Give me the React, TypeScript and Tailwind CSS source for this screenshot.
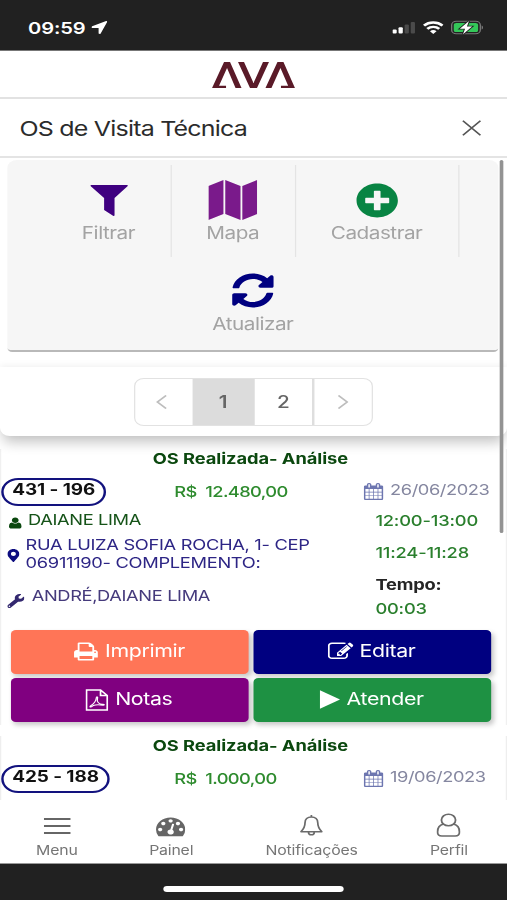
import { FaMapMarkerAlt, FaPlusCircle, FaSyncAlt, FaWrench } from "react-icons/fa";

const paths = {
  print:
    "M448 1536h896v-256h-896v256zm0-640h896v-384h-160q-40 0-68-28t-28-68v-160h-640v640zm1152 64q0-26-19-45t-45-19-45 19-19 45 19 45 45 19 45-19 19-45zm128 0v416q0 13-9.5 22.5t-22.5 9.5h-224v160q0 40-28 68t-68 28h-960q-40 0-68-28t-28-68v-160h-224q-13 0-22.5-9.5t-9.5-22.5v-416q0-79 56.5-135.5t135.5-56.5h64v-544q0-40 28-68t68-28h672q40 0 88 20t76 48l152 152q28 28 48 76t20 88v256h64q79 0 135.5 56.5t56.5 135.5z",
  edit:
    "M888 1184l116-116-152-152-116 116v56h96v96h56zm440-720q-16-16-33 1l-350 350q-17 17-1 33t33-1l350-350q17-17 1-33zm80 594v190q0 119-84.5 203.5t-203.5 84.5h-832q-119 0-203.5-84.5t-84.5-203.5v-832q0-119 84.5-203.5t203.5-84.5h832q63 0 117 25 15 7 18 23 3 17-9 29l-49 49q-14 14-32 8-23-6-45-6h-832q-66 0-113 47t-47 113v832q0 66 47 113t113 47h832q66 0 113-47t47-113v-126q0-13 9-22l64-64q15-15 35-7t20 29zm-96-738l288 288-672 672h-288v-288zm444 132l-92 92-288-288 92-92q28-28 68-28t68 28l152 152q28 28 28 68t-28 68z",
  calendar:
    "M192 1664h288v-288h-288v288zm352 0h320v-288h-320v288zm-352-352h288v-320h-288v320zm352 0h320v-320h-320v320zm-352-384h288v-288h-288v288zm736 736h320v-288h-320v288zm-384-736h320v-288h-320v288zm768 736h288v-288h-288v288zm-384-352h320v-320h-320v320zm-352-864v-288q0-13-9.5-22.5t-22.5-9.5h-64q-13 0-22.5 9.5t-9.5 22.5v288q0 13 9.5 22.5t22.5 9.5h64q13 0 22.5-9.5t9.5-22.5zm736 864h288v-320h-288v320zm-384-384h320v-288h-320v288zm384 0h288v-288h-288v288zm32-480v-288q0-13-9.5-22.5t-22.5-9.5h-64q-13 0-22.5 9.5t-9.5 22.5v288q0 13 9.5 22.5t22.5 9.5h64q13 0 22.5-9.5t9.5-22.5zm384-64v1280q0 52-38 90t-90 38h-1408q-52 0-90-38t-38-90v-1280q0-52 38-90t90-38h128v-96q0-66 47-113t113-47h64q66 0 113 47t47 113v96h384v-96q0-66 47-113t113-47h64q66 0 113 47t47 113v96h128q52 0 90 38t38 90z",
  gauge:
    "M384 1152q0-53-37.5-90.5t-90.5-37.5-90.5 37.5-37.5 90.5 37.5 90.5 90.5 37.5 90.5-37.5 37.5-90.5zm192-448q0-53-37.5-90.5t-90.5-37.5-90.5 37.5-37.5 90.5 37.5 90.5 90.5 37.5 90.5-37.5 37.5-90.5zm428 481l101-382q6-26-7.5-48.5t-38.5-29.5-48 6.5-30 39.5l-101 382q-60 5-107 43.5t-63 98.5q-20 77 20 146t117 89 146-20 89-117q16-60-6-117t-72-91zm660-33q0-53-37.5-90.5t-90.5-37.5-90.5 37.5-37.5 90.5 37.5 90.5 90.5 37.5 90.5-37.5 37.5-90.5zm-640-640q0-53-37.5-90.5t-90.5-37.5-90.5 37.5-37.5 90.5 37.5 90.5 90.5 37.5 90.5-37.5 37.5-90.5zm448 192q0-53-37.5-90.5t-90.5-37.5-90.5 37.5-37.5 90.5 37.5 90.5 90.5 37.5 90.5-37.5 37.5-90.5zm320 448q0 261-141 483-19 29-54 29h-1402q-35 0-54-29-141-221-141-483 0-182 71-348t191-286 286-191 348-71 348 71 286 191 191 286 71 348z",
  user:
    "M1600 1405q0 120-73 189.5t-194 69.5h-874q-121 0-194-69.5t-73-189.5q0-53 3.5-103.5t14-109 26.5-108.5 43-97.5 62-81 85.5-53.5 111.5-20q9 0 42 21.5t74.5 48 108 48 133.5 21.5 133.5-21.5 108-48 74.5-48 42-21.5q61 0 111.5 20t85.5 53.5 62 81 43 97.5 26.5 108.5 14 109 3.5 103.5zm-320-893q0 159-112.5 271.5t-271.5 112.5-271.5-112.5-112.5-271.5 112.5-271.5 271.5-112.5 271.5 112.5 112.5 271.5z",
};

const Glyph = ({ name, className }: { name: keyof typeof paths; className: string }) => (
  <svg viewBox="0 0 1792 1792" fill="currentColor" className={className}>
    <path d={paths[name]} />
  </svg>
);

const StatusBar = () => (
  <div className="flex h-[51px] items-center justify-between border-b border-[#777] bg-[#212121] pt-[5px] pr-[19px] pl-[23px] text-white">
    <div className="flex items-center gap-[5px]">
      <span className="text-[16.5px] leading-5 font-semibold tracking-[-0.1px]">09:59</span>
      <svg viewBox="0 0 13 13" className="h-[13px] w-[13px]" fill="currentColor">
        <path d="M12.1 .1 .6 5.300c-.9.5-.6 1.800.3 1.800H5.900v5c0 1 1.300 1.200 1.700 .3L12.900 .9c.2-.6-.2-1-.8-.8z" />
      </svg>
    </div>
    <div className="flex items-center gap-[6px]">
      <svg viewBox="0 0 19 13" className="h-[13px] w-[19px]">
        <rect x="0" y="8.500" width="3.500" height="4" rx="1" fill="#fff" />
        <rect x="5" y="6.300" width="3.500" height="6.200" rx="1" fill="#fff" />
        <rect x="10" y="3.500" width="3.500" height="9" rx="1" fill="#4b4b4b" />
        <rect x="15" y="1" width="3.500" height="11.500" rx="1" fill="#4b4b4b" />
      </svg>
      <svg viewBox="0 0 17 13" className="h-[13px] w-[17px]" fill="none" stroke="#fff" strokeWidth="2.400">
        <path d="M.9 4.700a10.800 10.800 0 0 1 15.200 0M3.600 7.900a7 7 0 0 1 9.800 0" />
        <path d="M8.500 12.900 5.800 10.300a3.900 3.900 0 0 1 5.400 0z" fill="#fff" stroke="none" />
      </svg>
      <svg viewBox="0 0 27 15" className="h-[15px] w-[27px]">
        <rect x=".6" y="1.200" width="23.500" height="12.600" rx="3.800" fill="none" stroke="#777" strokeWidth="1.100" />
        <rect x="2.300" y="2.900" width="20" height="9.200" rx="2.200" fill="#34c759" />
        <path d="M25.200 5.500c1.500.5 1.500 3.500 0 4z" fill="#777" />
        <path d="M14.800 1 7.300 8.700h4.300L9.900 14.300 17.400 6.500h-4.300z" fill="#fff" stroke="#212121" strokeWidth="1.600" paintOrder="stroke" />
      </svg>
    </div>
  </div>
);

const LogoBar = () => (
  <div className="flex h-[48px] items-center justify-center border-b-2 border-[#e2e2e2] bg-white pt-[2px]">
    <svg viewBox="0 0 83 26" preserveAspectRatio="none" className="h-[26px] w-[68px]" fill="#5a1a28">
      <path d="M0 26 12 0h6L29.500 26h-6L15 6 7 23.800h7V26z" />
      <path d="M26 0h6l9.500 21L51 0h6L45 26h-7z" />
      <path d="M83 26 71.500 0h-6L53.500 26h6L68.500 6 76.200 23.800H69V26z" />
    </svg>
  </div>
);

const TitleBar = () => (
  <div className="flex h-[59px] items-center justify-between border-b-2 border-[#e4e4e4] bg-white pt-[3px] pr-[21px] pl-[16px]">
    <h1 className="text-[20.5px] tracking-[-0.65px] text-[#2b2b2b]">OS de Visita Técnica</h1>
    <svg viewBox="0 0 16 16" preserveAspectRatio="none" className="mb-[3px] h-[16px] w-[16px]" fill="none" stroke="#555" strokeWidth="1.500">
      <path d="M.8 .8l14.400 14.400M15.200 .8.8 15.200" />
    </svg>
  </div>
);

const Toolbar = () => (
  <div className="mt-[2px] ml-[6px] h-[192px] w-[403px] rounded-t-lg rounded-b-sm border-b-2 border-[#b9b9b9] bg-[#f6f6f6] pt-[5px] text-[17px] tracking-[-0.4px] text-[#a3a3a3]">
    <div className="flex h-[92px] justify-center">
      <div className="flex w-[102px] flex-col items-center border-r border-[#e4e4e4] pt-[20px]">
        <svg viewBox="0 0 38 31" preserveAspectRatio="none" className="h-[31px] w-[31px]" fill="#3f0080">
          <path d="M1 0h36q1.200 0 .8 1L24.500 13v17.500q-.5.8-1.500.3L14 25V13L.3 1Q0 0 1 0z" />
        </svg>
        <span className="mt-[5px] leading-6">Filtrar</span>
      </div>
      <div className="flex w-[102px] flex-col items-center border-r border-[#e4e4e4] pt-[15px]">
        <svg viewBox="0 0 48 40" preserveAspectRatio="none" className="h-[40px] w-[40px]" fill="#7a1a8b">
          <path d="M0 6 14.800 0v34L0 40zM16.600 0 31.600 6V40l-15-6zM33.400 6 48 0v34l-14.600 6z" />
        </svg>
        <span className="mt-px leading-6">Mapa</span>
      </div>
      <div className="flex w-[134px] flex-col items-center border-r border-[#e4e4e4] pt-[18px]">
        <FaPlusCircle className="h-[35px] w-[35px] text-[#088443]" />
        <span className="mt-[3px] leading-6">Cadastrar</span>
      </div>
    </div>
    <div className="flex flex-col items-center pt-[16px]">
      <FaSyncAlt className="h-[35px] w-[35px] text-[#000080]" />
      <span className="mt-[4px] leading-6">Atualizar</span>
    </div>
  </div>
);

const Pager = () => (
  <div className="relative mt-[15px] flex h-[69px] justify-center rounded-b-lg bg-white pt-[11px] shadow-[0_9px_12px_-3px_rgba(0,0,0,0.24),0_-2px_6px_rgba(0,0,0,0.05)]">
    <div className="flex h-[48px] w-[196px] overflow-hidden rounded-lg border-[1.5px] border-[#e2e2e2] text-[17px] text-[#666]">
      <div className="flex w-[47px] items-center justify-center pr-[4px]">
        <svg viewBox="0 0 9 13" className="h-[14px] w-[9px]" fill="none" stroke="#bdbdbd" strokeWidth="1.600">
          <path d="M8.300 0 1.200 6.500l7.100 6.500" />
        </svg>
      </div>
      <div className="flex w-[51px] items-center justify-center bg-[#dcdcdc] pt-[2px] pr-px font-semibold">1</div>
      <div className="flex w-[49px] items-center justify-center border-r-2 border-[#dedede] pt-[2px] font-medium">2</div>
      <div className="flex flex-1 items-center justify-center pr-px">
        <svg viewBox="0 0 9 13" className="h-[14px] w-[9px]" fill="none" stroke="#bdbdbd" strokeWidth="1.600">
          <path d="M.7 0l7.100 6.500-7.100 6.500" />
        </svg>
      </div>
    </div>
  </div>
);

const CardHeader = ({ code, value, date }: { code: string; value: string; date: string }) => (
  <>
    <h2 className="h-[28px] pt-px pr-[5px] text-center text-[15px] leading-[17px] font-bold tracking-[-0.05px] text-[#0b480f]">
      OS Realizada- Análise
    </h2>
    <div className="flex h-[28px]">
      <div className="w-[142px]">
        <span className="inline-block h-[28px] rounded-full border-2 border-[#12127e] px-[7px] text-[15.500px] leading-[20px] font-bold tracking-[-0.05px] text-[#111]">
          {code}
        </span>
      </div>
      <span className="w-[155px] text-[15px] leading-[29px] font-medium tracking-[-0.5px] whitespace-pre text-[#2e8b2e]">{value}</span>
      <Glyph name="calendar" className="mt-[6px] h-[17px] w-[17px] text-[#6d76b0]" />
      <span className="ml-[5px] text-[15px] leading-[25px] tracking-[-0.35px] text-[#8587a0]">{date}</span>
    </div>
  </>
);

const OrderDetails = () => (
  <div className="flex h-[124.5px] pt-px text-[15px] tracking-[-0.3px] text-[#2d2585]">
    <div className="w-[307px] pl-[5px]">
      <div className="flex h-[29px] items-center gap-[4px] text-[#155318]">
        <Glyph name="user" className="mt-[5px] h-[14px] w-[13px] text-[#0b480f]" />
        <span>DAIANE LIMA</span>
      </div>
      <div className="flex h-[37px] items-center gap-[5px]">
        <FaMapMarkerAlt className="mt-[3px] h-[13px] w-[10px] text-[#0d0d80]" />
        <span className="leading-[18px] tracking-[-0.25px]">
          RUA LUIZA SOFIA ROCHA, 1- CEP
          <br />
          06911190- COMPLEMENTO:
        </span>
      </div>
      <div className="flex h-[49px] items-center gap-[6px] text-[#453a7c]">
        <FaWrench className="mt-[8px] h-[14px] w-[14px] text-[#33286f]" />
        <span>ANDRÉ,DAIANE LIMA</span>
      </div>
    </div>
    <div className="font-medium tracking-[-0.15px] text-[#2a7f2d]">
      <p className="h-[32px] leading-[30px]">12:00-13:00</p>
      <p className="h-[32px] leading-[30px]">11:24-11:28</p>
      <p className="h-[24px] leading-[30px] font-bold text-[#252525]">Tempo:</p>
      <p className="leading-[30px]">00:03</p>
    </div>
  </div>
);

const buttonClass = "flex h-[44px] items-center justify-center gap-[5px] rounded shadow-[2px_3px_5px_rgba(0,0,0,0.22)]";

const Actions = () => (
  <div className="grid grid-cols-[195px_195px] gap-x-[4px] gap-y-[4px] pl-[7.5px] text-[17.5px] tracking-[-0.3px] text-white">
    <button className={`${buttonClass} bg-[#ff7557]`}>
      <Glyph name="print" className="h-[21px] w-[21px]" />
      Imprimir
    </button>
    <button className={`${buttonClass} bg-[#000080]`}>
      <Glyph name="edit" className="h-[21px] w-[21px]" />
      Editar
    </button>
    <button className={`${buttonClass} bg-[#800080]`}>
      <svg viewBox="0 0 19 22" className="h-[22px] w-[19px]" fill="none" stroke="currentColor" strokeWidth="1.400">
        <path d="M1 1h11.500L18 6.500V21H1zM12.500 1v5.500H18" />
        <path d="M4 18c-1.200-1 4.500-2.500 5-9 .2-2 1.500-1 1 .5-1 3.500 1.500 6 4.500 5.700 1.500 0 1.300 1.200 0 1-3-.6-5.500-.8-8 .3C5.500 17.500 4.700 18.500 4 18z" strokeWidth="1" />
      </svg>
      Notas
    </button>
    <button className={`${buttonClass} bg-[#1e9143]`}>
      <svg viewBox="0 0 17 19" className="h-[19px] w-[17px]" fill="currentColor">
        <path d="M.5 .3 17 9.500.5 18.700z" />
      </svg>
      Atender
    </button>
  </div>
);

const BottomNav = () => (
  <nav className="flex h-[64px] border-b border-[#999] bg-white pl-[3px] text-[13px] tracking-[-0.15px] text-[#757575]">
    <div className="flex w-[88px] flex-col items-center pt-[18px]">
      <svg viewBox="0 0 22 16" className="h-[16px] w-[22px]" stroke="#666" strokeWidth="1.800">
        <path d="M0 1h22M0 8h22M0 15h22" />
      </svg>
      <span className="mt-[6px] leading-5">Menu</span>
    </div>
    <div className="flex w-[101px] flex-col items-center pt-[14px]">
      <Glyph name="gauge" className="h-[24px] w-[24px] text-[#666]" />
      <span className="mt-[2px] leading-5">Painel</span>
    </div>
    <div className="flex w-[131px] flex-col items-center pt-[14px]">
      <svg viewBox="0 0 20 23" className="h-[23px] w-[19px]" fill="none" stroke="#6b6b6b" strokeWidth="1.500" strokeLinejoin="round">
        <path d="M10 .5v2M10 2.500C6.500 2.500 4.500 5 4.500 8.500c0 5-1.500 7-3.500 9.500h18c-2-2.500-3.500-4.500-3.500-9.500 0-3.500-2-6-5.500-6zM7.500 18.500a2.500 2.800 0 0 0 5 0" />
      </svg>
      <span className="mt-[3px] leading-5">Notificações</span>
    </div>
    <div className="flex w-[96px] flex-col items-center pt-[13px]">
      <svg viewBox="0 0 20 24" className="h-[24px] w-[20px]" fill="none" stroke="#6b6b6b" strokeWidth="1.500">
        <circle cx="10" cy="7" r="5.800" />
        <path d="M5.800 11C2.500 12 1 15 1 19c0 2.500 1.300 4 3.500 4h11c2.200 0 3.500-1.500 3.500-4 0-4-1.500-7-4.800-8" />
      </svg>
      <span className="mt-[3px] leading-5">Perfil</span>
    </div>
  </nav>
);

export default function App() {
  return (
    <div className="h-[900px] w-[507px] overflow-hidden bg-white">
      {/* the screen is 416 units wide and stretched to fill the window */}
      <div className="flex h-[900px] w-[416px] origin-top-left scale-x-[1.21875] flex-col font-['Inter','Liberation_Sans',sans-serif]">
        <StatusBar />
        <LogoBar />
        <TitleBar />
        <main className="relative h-[642px] overflow-hidden bg-white">
          <Toolbar />
          <Pager />
          <section className="mt-[13px] h-[276px] border-x border-[#f0f0f0]">
            <CardHeader code="431 - 196" value="R$  12.480,00" date="26/06/2023" />
            <OrderDetails />
            <Actions />
          </section>
          <section className="mt-[10.5px] h-[66px] border-x border-b border-[#eee]">
            <CardHeader code="425 - 188" value="R$  1.000,00" date="19/06/2023" />
          </section>
          <div className="absolute top-[2px] right-[3px] h-[373px] w-[3px] rounded-full bg-[#939393]" />
        </main>
        <BottomNav />
        <div className="flex h-[36px] justify-center bg-[#212121] pt-[22px]">
          <div className="h-[6px] w-[148px] rounded-full bg-white" />
        </div>
      </div>
    </div>
  );
}
